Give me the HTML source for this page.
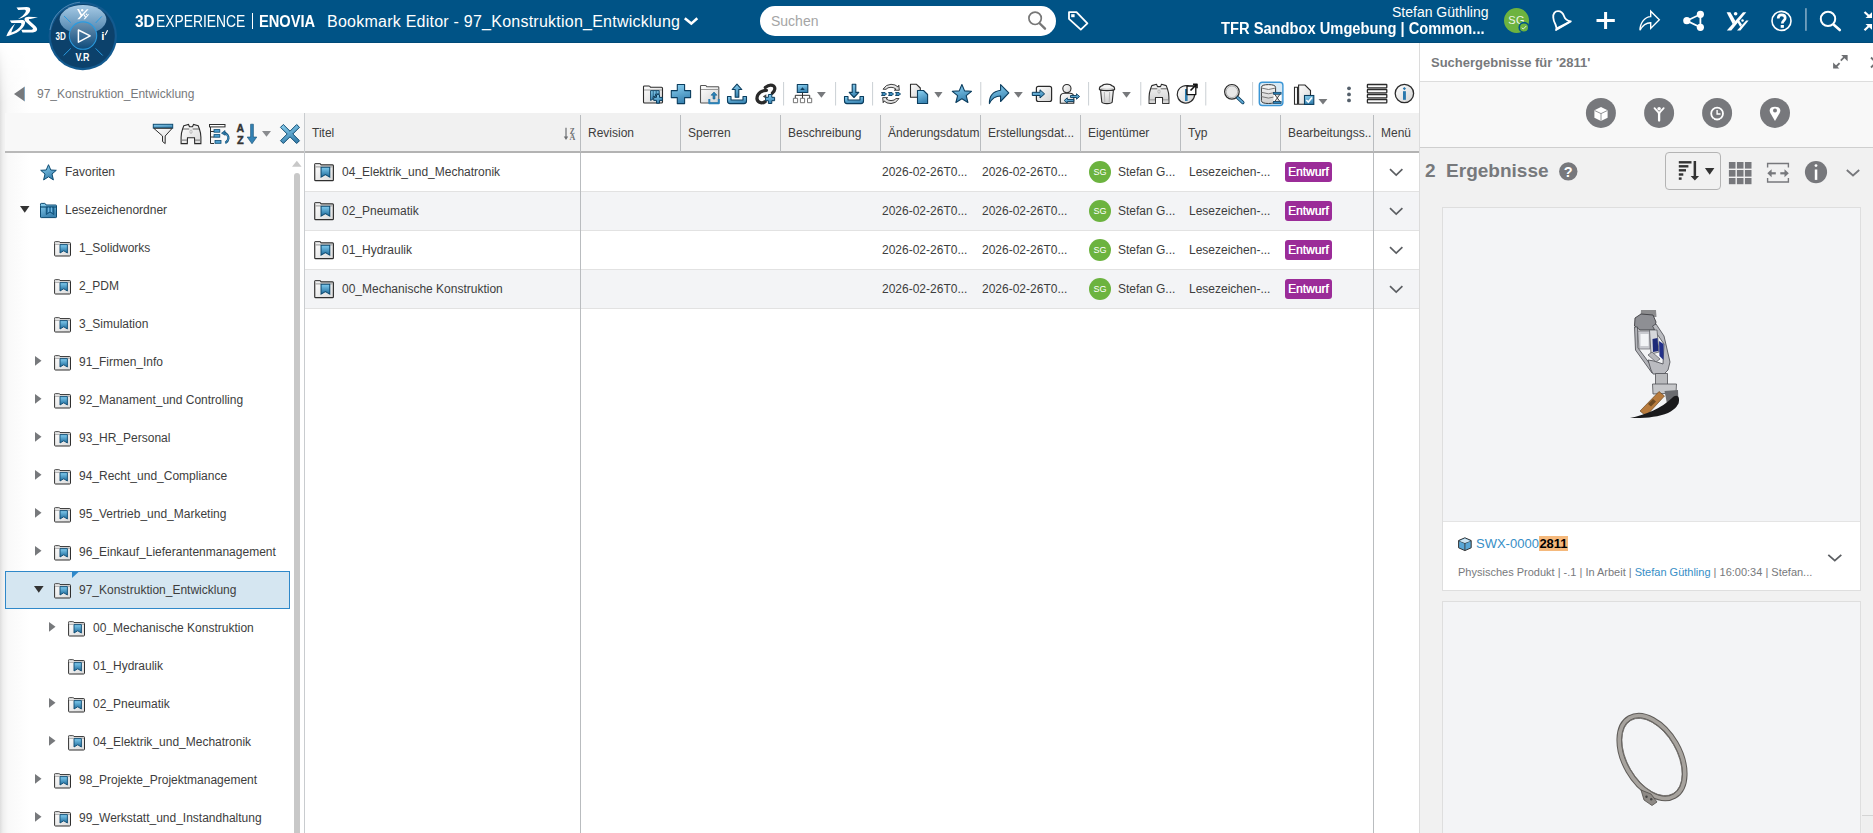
<!DOCTYPE html>
<html><head><meta charset="utf-8">
<style>
*{box-sizing:border-box;margin:0;padding:0}
html,body{width:1873px;height:833px;overflow:hidden;background:#fff;font-family:"Liberation Sans",sans-serif;color:#3d3d3d;font-size:12px}
.a{position:absolute}
svg{position:absolute;overflow:visible}
#hdr{left:0;top:0;width:1873px;height:43px;background:#005386;border-bottom:1px solid #004a78}
.ht{color:#fff;white-space:nowrap}
#lshadow{left:0;top:43px;width:30px;height:790px;background:linear-gradient(to right,#dedede 0,#efefef 3px,#f9f9f9 8px,#fff 30px);-webkit-mask-image:linear-gradient(to bottom,transparent 0,rgba(0,0,0,.5) 25px,#000 60px);mask-image:linear-gradient(to bottom,transparent 0,rgba(0,0,0,.5) 25px,#000 60px)}
.tr{position:absolute;height:38px;line-height:38px;white-space:nowrap;color:#3d3d3d;font-size:12px}
.th{position:absolute;top:114px;height:40px;line-height:39px;font-size:12px;color:#3d3d3d;white-space:nowrap}
.row{position:absolute;left:305px;width:1114px;height:39px;border-bottom:1px solid #e2e2e2}
.cell{position:absolute;top:0;line-height:38px;font-size:12px;color:#3d3d3d;white-space:nowrap}
.badge{position:absolute;background:#9b2c98;color:#fff;font-size:12px;height:19.5px;line-height:21px;border-radius:3px;padding:0 3px;width:47px;text-align:left;text-shadow:0.35px 0 0 #fff}
</style></head><body>

<div id="lshadow" class="a"></div>

<!-- HEADER -->
<div id="hdr" class="a">
  <div class="a ht" style="left:134.8px;top:13px;font-size:16px;font-weight:bold;transform:scaleX(0.96);transform-origin:0 0">3D</div>
  <div class="a ht" style="left:156.3px;top:13px;font-size:16px;transform:scaleX(0.866);transform-origin:0 0">EXPERIENCE</div>
  <div class="a" style="left:252px;top:13px;width:1.3px;height:16px;background:#fff"></div>
  <div class="a ht" style="left:259.3px;top:13px;font-size:16px;font-weight:bold;transform:scaleX(0.915);transform-origin:0 0">ENOVIA</div>
  <div class="a ht" style="left:327px;top:13px;font-size:16px;letter-spacing:0.24px">Bookmark Editor - 97_Konstruktion_Entwicklung</div>
  <div class="a" style="left:760px;top:6px;width:296px;height:30px;background:#fff;border-radius:15px"></div>
  <div class="a" style="left:771px;top:13px;font-size:14px;color:#a5a5a5">Suchen</div>
  <div class="a ht" style="left:1392px;top:4px;font-size:14px">Stefan Güthling</div>
  <div class="a ht" style="left:1221px;top:20px;font-size:16px;font-weight:bold;transform:scaleX(0.918);transform-origin:0 0">TFR Sandbox Umgebung | Common...</div>
  <div class="a" style="left:1504px;top:8px;width:25px;height:25px;border-radius:50%;background:#6db33f;color:#fff;font-size:11px;line-height:24px;text-align:center;letter-spacing:0.2px;color:#eef6e8">SG</div>
</div>
<svg width="1873" height="80" style="left:0;top:0" viewBox="0 0 1873 80">
  <!-- 3DS logo -->
  <g fill="#fff">
    <path d="M16.5,7.4 L26.8,7 C30.8,7 31,9.8 29.3,12.5 C27.3,15.6 23,18 17.8,19.3 C21.5,17 24.5,14.5 25.6,12 C26.3,10.4 25.6,9.8 23.8,9.8 L18.2,9.9 Z"/>
    <path d="M9.8,20.5 L21.8,20.1 C25.6,20.1 25.8,22.6 24.1,25.8 C20.8,31.5 13.5,35 6.3,36.3 C8,31.5 11,27 15.3,23.5 C13.3,27 11.8,30 11.4,32.6 C15.6,31 19.3,28.2 21,25.2 C21.9,23.5 21.4,22.9 19.8,22.9 L11.5,23 Z"/>
    <path d="M38,17.3 L28.8,16.7 C24,16.7 23.5,19.6 26,22 L31.8,27.2 C33.8,29 33.5,29.7 30.8,29.7 L21.3,29.8 L22.5,32.5 L30.5,32.6 C37.5,32.6 38.8,29.3 35.3,26 L29.8,21 C28.2,19.5 28.5,19.1 30.5,19.1 Z"/>
  </g>
  <!-- compass -->
  <defs>
    <linearGradient id="lens" x1="0" y1="0" x2="0" y2="1"><stop offset="0" stop-color="#a7cbe6"/><stop offset="1" stop-color="#4b80aa"/></linearGradient>
    <linearGradient id="ctr" x1="0" y1="0" x2="0" y2="1"><stop offset="0" stop-color="#6f93b0"/><stop offset="0.5" stop-color="#3d6f98"/><stop offset="1" stop-color="#0e4b7a"/></linearGradient>
  </defs>
  <circle cx="82.8" cy="36" r="34.2" fill="#135a8f"/>
  <path d="M50,30 A33,33 0 0 1 80,2.2" fill="none" stroke="#6d9cc4" stroke-width="0.7"/>
  <circle cx="82.8" cy="36" r="32" fill="#0c416b"/>
  <ellipse cx="83" cy="19.5" rx="23.4" ry="14.6" fill="url(#lens)"/>
  <circle cx="83" cy="35.6" r="13.7" fill="url(#ctr)" stroke="#2a9be0" stroke-width="1.1"/>
  <path d="M78.4,30 L78.4,42.2 L90.2,35.9 Z" fill="none" stroke="#fff" stroke-width="1.5" stroke-linejoin="round"/>
  <g stroke="#2a9be0" stroke-width="1"><line x1="64" y1="16" x2="70.8" y2="22.6"/><line x1="101.8" y1="16.4" x2="95.6" y2="23"/><line x1="63.6" y1="55.5" x2="70.8" y2="48.4"/><line x1="95.6" y1="48.4" x2="102.7" y2="55.5"/></g>
  <g fill="#fff" font-family="Liberation Sans" font-weight="bold">
    <text x="55.5" y="39.9" font-size="11.3" textLength="10.3" lengthAdjust="spacingAndGlyphs">3D</text>
    <text x="75.4" y="60.8" font-size="10.4" textLength="14" lengthAdjust="spacingAndGlyphs">V.R</text>
    <text x="101.3" y="40.4" font-size="11.5">i</text>
  </g>
  
  <g fill="#fff">
    <path d="M77.3,19.2 L79.4,19.2 L88.6,9.3 L86.8,9.3 Z"/>
    <path d="M77,9.1 L79,9.1 L82.5,15.5 L81.3,17 Z"/>
    <circle cx="82.2" cy="10.3" r="1.2"/>
    <path d="M83.5,19.2 L85,19.2 L89.2,14.2 L88,14.2 Z"/>
    <path d="M83.2,14.5 L84.6,14.5 L86,16.8 L85.2,17.7 Z"/>
    <circle cx="86.5" cy="14.2" r="0.8"/>
  </g>
  <path d="M105.2,35 L107.6,30.2" stroke="#fff" stroke-width="1.2"/>
  <!-- title chevron -->
  <path d="M684.8,18.3 L691.3,23.6 L697.3,18.3" fill="none" stroke="#fff" stroke-width="2.6"/>
  <!-- search icon -->
  <circle cx="1035.1" cy="18.3" r="6.2" fill="none" stroke="#777" stroke-width="1.7"/>
  <path d="M1039.8,23.5 L1045,28.7" stroke="#777" stroke-width="2.4" stroke-linecap="round"/>
  <!-- tag -->
  <path d="M1069,12.2 L1076.5,12.2 L1087.4,23.4 L1080.8,29.6 L1069,18.9 Z" fill="none" stroke="#fff" stroke-width="1.8" stroke-linejoin="round"/>
  <rect x="1071.2" y="14.2" width="3.4" height="3" fill="#fff"/>
  <!-- avatar badge -->
  <circle cx="1524" cy="27.4" r="4.8" fill="#6db33f" stroke="#005386" stroke-width="1.6"/>
  <path d="M1521.7,27.8 L1523.3,29 L1526.4,25.9" fill="none" stroke="#e9f3ff" stroke-width="0.9"/>
  <!-- bell -->
  <path d="M1553.3,17.8 C1552.8,13.5 1555,11.2 1558,11.2 C1561,11.2 1563,13 1564.2,16.5 C1565,19 1566.5,20.5 1570.8,21.4 L1556,30 C1556.8,28 1556.5,26.5 1555.5,24.5 C1554.3,22.5 1553.5,20.5 1553.3,17.8 Z" fill="none" stroke="#fff" stroke-width="1.8" stroke-linejoin="round"/>
  <path d="M1556,27.8 L1569.8,20.8 L1571.4,21.6 L1556,30.6 Z" fill="#fff"/>
  <!-- plus -->
  <path d="M1596.5,20.6 L1614.8,20.6 M1605.6,12 L1605.6,29" stroke="#fff" stroke-width="3"/>
  <!-- share arrow -->
  <path d="M1640,30.3 C1640,22.5 1645,16.8 1650.7,16.6 L1650.7,11.2 L1659.3,19.8 L1650.7,28.4 L1650.7,22.8 C1646,22.8 1642.5,25.5 1640,30.3 Z" fill="none" stroke="#fff" stroke-width="1.4" stroke-linejoin="miter"/>
  <!-- share nodes -->
  <g fill="#fff"><circle cx="1686.8" cy="20.7" r="3.6"/><circle cx="1700.4" cy="14.3" r="3.6"/><circle cx="1700.4" cy="27.3" r="3.6"/></g>
  <path d="M1686.8,20.7 L1700.4,14.3 L1700.4,27.3 Z" fill="none" stroke="#fff" stroke-width="1.8"/>
  <!-- Yy -->
  <g fill="#fff">
    <path d="M1726.8,30.5 L1731.3,30.5 L1746.3,12.2 L1743,12.2 Z"/>
    <path d="M1726.6,12.2 L1730.4,12.2 L1735.4,21 L1732.8,24.3 Z"/>
    <circle cx="1735.6" cy="13.8" r="1.8"/>
    <path d="M1737,30.5 L1740.4,30.5 L1748.6,20.6 L1746.2,20.6 Z"/>
    <path d="M1736.8,21 L1739.5,21 L1742,24.8 L1740.2,27 Z"/>
    <circle cx="1742.5" cy="20.6" r="1.25"/>
  </g>
  <!-- help -->
  <circle cx="1781.5" cy="20.9" r="9.5" fill="none" stroke="#fff" stroke-width="1.6"/>
  <path d="M1778.2,18.6 C1778.2,16.1 1779.6,14.9 1781.6,14.9 C1783.7,14.9 1785.2,16.1 1785.2,18 C1785.2,20.4 1782.3,20.8 1782.3,23.6" fill="none" stroke="#fff" stroke-width="2.7"/>
  <rect x="1780.7" y="25" width="3.2" height="2.8" fill="#fff"/>
  <!-- separator -->
  <rect x="1805.4" y="8.2" width="1.1" height="22.6" fill="#b9cfe0"/>
  <!-- search -->
  <circle cx="1828" cy="18.9" r="7.2" fill="none" stroke="#fff" stroke-width="2"/>
  <path d="M1833.8,24.8 L1839.8,30" stroke="#fff" stroke-width="2.6" stroke-linecap="round"/>
  <!-- compress -->
  <path d="M1864.5,12 L1870,17" stroke="#fff" stroke-width="2.2"/>
  <path d="M1872,12.2 L1872,18 L1865.5,18 Z" fill="#fff"/>
  <path d="M1864.5,30.2 L1870,25" stroke="#fff" stroke-width="2.2"/>
  <path d="M1872,29.8 L1872,24 L1865.5,24 Z" fill="#fff"/>
</svg>
<!-- TOOLBAR -->
<svg width="1873" height="833" style="left:0;top:0;pointer-events:none" viewBox="0 0 1873 833">
<defs>
  <linearGradient id="bg1" x1="0" y1="0" x2="0.3" y2="1"><stop offset="0" stop-color="#8ed3f3"/><stop offset="1" stop-color="#3a85b3"/></linearGradient>
  <linearGradient id="bg2" x1="0" y1="0" x2="0" y2="1"><stop offset="0" stop-color="#8fd0ef"/><stop offset="1" stop-color="#2f77a6"/></linearGradient>
  <linearGradient id="gg" x1="0" y1="0" x2="1" y2="1"><stop offset="0" stop-color="#ffffff"/><stop offset="1" stop-color="#d4d4d4"/></linearGradient>
  <linearGradient id="gg2" x1="0" y1="0" x2="0" y2="1"><stop offset="0" stop-color="#f6f6f6"/><stop offset="1" stop-color="#cfcfcf"/></linearGradient>
</defs>
<!-- breadcrumb back triangle -->
<path d="M14,94 L24.8,86.5 L24.8,101.5 Z" fill="#77797c"/>
<path d="M24.5,87 L24.5,101" stroke="#7db8e0" stroke-width="0.6"/>

<g stroke="#0b3d5e" stroke-linejoin="round">
  <!-- 1 folder with bookmark plus -->
  <path d="M643.5,88 L643.5,86.8 Q643.5,86 644.5,86 L649,86 Q650,86 650.5,87.2 L661.5,87.2 Q662.5,87.2 662.5,88.2 L662.5,102 Q662.5,103 661.5,103 L644.5,103 Q643.5,103 643.5,102 Z" fill="url(#gg)" stroke="#2b2b2b" stroke-width="1.1"/>
  <path d="M644,90 L662,90" stroke="#aaa" stroke-width="1.2"/>
  <path d="M650.6,90.6 L659.2,90.6 L659.2,94 L655.5,94 L655.5,96.5 L653,96.5 L653,99 L650.6,100.5 Z" fill="url(#bg1)" stroke-width="0.9"/>
  <path d="M653.2,91 L653.2,96 M656.2,91 L656.2,93.5" stroke="#0b3d5e" stroke-width="0.7"/>
  <path d="M656.5,94.6 L659.5,94.6 L659.5,97.4 L662.3,97.4 L662.3,100.4 L659.5,100.4 L659.5,103.2 L656.5,103.2 L656.5,100.4 L653.7,100.4 L653.7,97.4 L656.5,97.4 Z" fill="url(#bg1)" stroke-width="1"/>
  <!-- 2 big plus -->
  <path d="M677.3,84.5 L684.6,84.5 L684.6,90.6 L690.6,90.6 L690.6,97.6 L684.6,97.6 L684.6,103.6 L677.3,103.6 L677.3,97.6 L671.3,97.6 L671.3,90.6 L677.3,90.6 Z" fill="url(#bg1)" stroke-width="1.1"/>
  <!-- 3 folder upload -->
  <path d="M700.5,87 L700.5,86.2 Q700.5,85.5 701.3,85.5 L705.5,85.5 Q706.3,85.5 706.8,86.8 L718,86.8 Q718.8,86.8 718.8,87.6 L718.8,102.3 Q718.8,103 718,103 L701.3,103 Q700.5,103 700.5,102.3 Z" fill="url(#gg)" stroke="#555" stroke-width="1.1"/>
  <path d="M701,89.5 L718.4,89.5" stroke="#999" stroke-width="1"/>
  <path d="M709.3,99 L709.3,103.2 L718.8,103.2 L718.8,99" fill="none" stroke="#2b82b8" stroke-width="2"/>
  <path d="M714,92 L717,95.2 L715,95.2 L715,99 L713,99 L713,95.2 L711,95.2 Z" fill="#2b82b8" stroke="#1a5f8c" stroke-width="0.6"/>
  <!-- 4 upload -->
  <path d="M727.5,96.5 L731,96.5 L731,100 L743,100 L743,96.5 L746.5,96.5 L746.5,101 Q746.5,103.6 744,103.6 L730,103.6 Q727.5,103.6 727.5,101 Z" fill="url(#bg1)" stroke-width="1.1"/>
  <path d="M737,84.2 L741.8,89.5 L738.8,89.5 L738.8,97.2 L735.2,97.2 L735.2,89.5 L732.2,89.5 Z" fill="url(#bg1)" stroke-width="1.1"/>
  <!-- 5 link plus -->
  <path d="M765.2,87.5 Q770,83.6 773.8,86 Q776.6,89 772.3,93.2" fill="none" stroke="#2a2a2a" stroke-width="3.2" stroke-linecap="round"/>
  <path d="M766.5,90.3 Q760.5,90.3 757.8,95 Q755.5,100 759.5,102.3 Q762.5,103.6 765.2,101.6" fill="none" stroke="#2a2a2a" stroke-width="3.2" stroke-linecap="round"/>
  <path d="M762.8,96.5 L766.3,94.3 L766.3,98.7 Z" fill="#444" stroke="none"/>
  <path d="M768.4,94.5 L771.8,94.5 L771.8,97.3 L774.6,97.3 L774.6,100.7 L771.8,100.7 L771.8,103.5 L768.4,103.5 L768.4,100.7 L765.6,100.7 L765.6,97.3 L768.4,97.3 Z" fill="url(#bg1)" stroke-width="1"/>
  <!-- 6 hierarchy -->
  <rect x="797.3" y="84.5" width="10.5" height="8" fill="url(#bg1)" stroke-width="1.1"/>
  <path d="M800.2,90 L802.5,87.2 L804.8,90 Z" fill="#0b3d5e" stroke="none"/>
  <path d="M802.5,92.5 L802.5,98 M795.3,98 L795.3,95.3 L809.7,95.3 L809.7,98" fill="none" stroke="#333" stroke-width="1"/>
  <rect x="793.4" y="98.3" width="4.2" height="4.4" fill="#fff" stroke="#666" stroke-width="0.9"/>
  <rect x="800.4" y="98.3" width="4.2" height="4.4" fill="#fff" stroke="#666" stroke-width="0.9"/>
  <rect x="807.5" y="98.3" width="4.2" height="4.4" fill="#fff" stroke="#666" stroke-width="0.9"/>
  <!-- 7 download -->
  <path d="M844.5,96.5 L848,96.5 L848,100 L860,100 L860,96.5 L863.5,96.5 L863.5,101 Q863.5,103.6 861,103.6 L847,103.6 Q844.5,103.6 844.5,101 Z" fill="url(#bg1)" stroke-width="1.1"/>
  <path d="M854,97.5 L858.8,92.4 L855.8,92.4 L855.8,84.3 L852.2,84.3 L852.2,92.4 L849.2,92.4 Z" fill="url(#bg1)" stroke-width="1.1"/>
  <!-- 8 sync -->
  <path d="M883,89.2 Q886,84.3 891,84.3 Q895.5,84.3 898,87 L898.8,85.2 L899.3,90.3 L894.3,90.2 L896,89.2 Q894,87.3 891,87.3 Q887.5,87.3 886,89.3 Z" fill="url(#gg2)" stroke="#2b2b2b" stroke-width="0.9"/>
  <path d="M899,98.5 Q896,103.6 891,103.6 Q886.5,103.6 884,100.9 L883.2,102.7 L882.7,97.6 L887.7,97.7 L886,98.7 Q888,100.6 891,100.6 Q894.5,100.6 896,98.6 Z" fill="url(#gg2)" stroke="#2b2b2b" stroke-width="0.9"/>
  <path d="M881.5,92.5 L885,92.5 L886.5,94 L885,95.5 L881.5,95.5 L882.5,94 Z M888.5,92.5 L892,92.5 L893.5,94 L892,95.5 L888.5,95.5 L889.5,94 Z M895.5,92.5 L899,92.5 L900.5,94 L899,95.5 L895.5,95.5 L896.5,94 Z" fill="#3b8bbd" stroke="#0b3d5e" stroke-width="0.9"/>
  <!-- 9 copy -->
  <path d="M910.5,84.3 L916.5,84.3 L920.3,88 L920.3,97.3 L910.5,97.3 Z" fill="url(#gg)" stroke="#2b2b2b" stroke-width="1.1"/>
  <path d="M917.5,90.5 L923.5,90.5 L927.6,94.5 L927.6,103.5 L917.5,103.5 Z" fill="url(#bg1)" stroke-width="1.1"/>
  <!-- 10 star -->
  <path d="M961.9,84.5 L964.6,90.9 L971.5,91.3 L966.2,95.7 L967.9,102.5 L961.9,98.8 L955.9,102.5 L957.6,95.7 L952.3,91.3 L959.2,90.9 Z" fill="url(#bg1)" stroke-width="1.1"/>
  <!-- 11 forward arrow -->
  <path d="M989.4,103.6 Q989,92 1000.6,90.2 L1000.6,84.6 L1008.8,92.9 L1000.6,101.5 L1000.6,96 Q993,96 989.4,103.6 Z" fill="url(#bg1)" stroke-width="1.1"/>
  <!-- 12 login -->
  <rect x="1036.4" y="86.3" width="15.2" height="15.2" rx="2" fill="url(#gg)" stroke="#2b2b2b" stroke-width="1.2"/>
  <path d="M1032.3,92.3 L1040,92.3 L1040,89.8 L1044.6,93.9 L1040,98 L1040,95.5 L1032.3,95.5 Z" fill="url(#bg1)" stroke-width="1"/>
  <!-- 13 user swap -->
  <circle cx="1066.9" cy="88.6" r="4.1" fill="url(#gg)" stroke="#2b2b2b" stroke-width="1.1"/>
  <path d="M1060.3,103.3 L1060.3,97.5 Q1060.3,93.5 1064,93.3 L1070,93.3 Q1073.5,93.5 1073.8,96.5 L1073.8,103.3 Z" fill="url(#gg)" stroke="#2b2b2b" stroke-width="1.1"/>
  <path d="M1070.5,95.5 L1076.5,95.5 L1076.5,93.8 L1079.6,96.5 L1076.5,99.2 L1076.5,97.5 L1070.5,97.5 Z" fill="url(#bg1)" stroke-width="0.9"/>
  <path d="M1073.8,99.5 L1067.3,99.5 L1067.3,97.8 L1064.2,100.5 L1067.3,103.2 L1067.3,101.5 L1073.8,101.5 Z" fill="url(#bg1)" stroke-width="0.9"/>
  <!-- 14 trash -->
  <path d="M1100.6,90.3 L1113.4,90.3 L1112.2,102.2 Q1111.8,103.6 1107,103.6 Q1102.2,103.6 1101.8,102.2 Z" fill="url(#gg2)" stroke="#2b2b2b" stroke-width="1.1"/>
  <path d="M1104.3,92 L1104.8,102 M1109.7,92 L1109.2,102" stroke="#b5b5b5" stroke-width="1"/>
  <path d="M1099.4,89.6 Q1099,86.4 1102.3,85.6 Q1103.2,84.1 1107,84.1 Q1110.8,84.1 1111.7,85.6 Q1115,86.4 1114.6,89.6 Q1107,91.6 1099.4,89.6 Z" fill="#f4f4f4" stroke="#2b2b2b" stroke-width="1.1"/>
  <path d="M1100.5,88.5 Q1107,90 1113.5,88.5" fill="none" stroke="#c8c8c8" stroke-width="1"/>
  <!-- 15 binoculars -->
  <path d="M1151.8,85.6 L1156.5,84.3 L1157.5,86.6 L1160.5,86.6 L1161.5,84.3 L1166.2,85.6 L1167.4,88.8 Q1168.9,93 1168.9,97 L1168.9,103.4 L1162.7,103.4 L1162.5,97.5 L1155.5,97.5 L1155.3,103.4 L1149.1,103.4 L1149.1,97 Q1149.1,93 1150.6,88.8 Z" fill="url(#gg2)" stroke="#2b2b2b" stroke-width="1.1"/>
  <path d="M1150.8,88.8 L1157.3,88.8 M1160.7,88.8 L1167.2,88.8" stroke="#555" stroke-width="0.9"/>
  <path d="M1149.6,100 L1155,100 M1163,100 L1168.4,100" stroke="#888" stroke-width="1.2"/>
  <rect x="1149.6" y="100.5" width="5.4" height="2.6" fill="#d5d5d5" stroke="none"/>
  <rect x="1163" y="100.5" width="5.4" height="2.6" fill="#d5d5d5" stroke="none"/>
  <ellipse cx="1159" cy="91.5" rx="1.1" ry="1.8" fill="none" stroke="#999" stroke-width="0.6"/>
  <!-- 16 pie export -->
  <path d="M1190,86.7 A8.7,8.7 0 1 0 1194.6,95" fill="url(#gg)" stroke="#2b2b2b" stroke-width="1.2"/>
  <rect x="1185" y="89" width="2.6" height="12" fill="#2e7eb0" stroke="none"/>
  <rect x="1187" y="86" width="8.8" height="8.6" fill="#fff" stroke="#111" stroke-width="1.3"/>
  <path d="M1190.5,90.5 L1196,85 M1193,84.3 L1197,84.3 L1197,88.3" fill="none" stroke="#111" stroke-width="1.6"/>
  <!-- 17 magnifier -->
  <circle cx="1231.9" cy="91.8" r="7.3" fill="#e8e8e8" stroke="#2b2b2b" stroke-width="1.2"/>
  <circle cx="1231.9" cy="91.8" r="5.8" fill="none" stroke="#999" stroke-width="0.7"/>
  <path d="M1237.8,97.8 L1242.8,102.5" stroke="#0b3d5e" stroke-width="3.4" stroke-linecap="round"/>
  <path d="M1237.8,97.8 L1242.8,102.5" stroke="#5fa8d3" stroke-width="1.8" stroke-linecap="round"/>
</g>
<!-- 18 selected db -->
<rect x="1259.3" y="82.3" width="23.6" height="23.2" rx="3" fill="#d9e9f4" stroke="#3a96d6" stroke-width="1.4"/>
<g stroke="#3a3a3a" stroke-width="1">
  <path d="M1261.4,87.5 Q1261.4,84.6 1268.5,84.6 Q1275.6,84.6 1275.6,87.5 L1275.6,100.6 Q1275.6,103.5 1268.5,103.5 Q1261.4,103.5 1261.4,100.6 Z" fill="url(#gg2)"/>
  <path d="M1261.4,88 Q1268.5,91 1275.6,88 M1261.4,92.3 Q1268.5,95.3 1275.6,92.3 M1261.4,96.6 Q1268.5,99.6 1275.6,96.6" fill="none" stroke="#777"/>
</g>
<rect x="1273.5" y="92.5" width="7.5" height="10.8" fill="#fff" stroke="none"/>
<path d="M1274.3,93.8 L1280.3,93.8 L1277.3,98 Z M1274.3,102 L1280.3,102 L1277.3,98 Z" fill="#e0e0e0" stroke="#333" stroke-width="0.9"/>
<rect x="1273.5" y="92.3" width="7.6" height="1.9" fill="#2e86be" stroke="#0b3d5e" stroke-width="0.7"/>
<rect x="1273.5" y="101.6" width="7.6" height="1.9" fill="#2e86be" stroke="#0b3d5e" stroke-width="0.7"/>
<!-- 19 paste check -->
<g stroke="#2b2b2b" stroke-width="1.1">
  <path d="M1294.5,87.3 L1297.5,87.3 L1297.5,104.2 L1294.5,104.2 Z" fill="#fff"/>
  <path d="M1298.6,85 L1305,85 L1310.5,90.5 L1310.5,104.2 L1298.6,104.2 Z" fill="url(#gg)"/>
</g>
<rect x="1304.5" y="95.5" width="9.3" height="8.9" fill="url(#bg1)" stroke="#0b3d5e" stroke-width="1.1"/>
<path d="M1306.3,100 L1308.3,102 L1312,97.5" fill="none" stroke="#fff" stroke-width="1.6"/>
<!-- dropdown triangles -->
<g fill="#77797c">
  <path d="M817,92 L825.8,92 L821.4,97.8 Z"/>
  <path d="M934.3,92 L942.5,92 L938.4,97.8 Z"/>
  <path d="M1014,92 L1022.8,92 L1018.4,97.8 Z"/>
  <path d="M1122.2,92 L1130.8,92 L1126.5,97.8 Z"/>
  <path d="M1318.5,99 L1327.4,99 L1323,104.5 Z"/>
</g>
<!-- separators -->
<g fill="#cfd4d8">
  <rect x="783" y="82" width="1.1" height="23.5"/>
  <rect x="835" y="82" width="1.1" height="23.5"/>
  <rect x="872" y="82" width="1.1" height="23.5"/>
  <rect x="980.2" y="82" width="1.1" height="23.5"/>
  <rect x="1088" y="82" width="1.1" height="23.5"/>
  <rect x="1140.2" y="82" width="1.1" height="23.5"/>
  <rect x="1205.2" y="82" width="1.1" height="23.5"/>
  <rect x="1252" y="82" width="1.1" height="23.5"/>
</g>
<!-- dots -->
<g fill="#55606b"><circle cx="1349" cy="88.3" r="1.9"/><circle cx="1349" cy="94.4" r="1.9"/><circle cx="1349" cy="100.4" r="1.9"/></g>
<!-- list -->
<g fill="#fbfbfb" stroke="#2b2b2b" stroke-width="1.3">
  <rect x="1367.4" y="84.5" width="19.4" height="3.4" rx="0.6"/>
  <rect x="1367.4" y="89.5" width="19.4" height="3.4" rx="0.6"/>
  <rect x="1367.4" y="94.5" width="19.4" height="3.4" rx="0.6"/>
  <rect x="1367.4" y="99.5" width="19.4" height="3.4" rx="0.6"/>
</g>
<!-- info -->
<circle cx="1404.4" cy="93.5" r="9.2" fill="url(#gg)" stroke="#2b2b2b" stroke-width="1.3"/>
<rect x="1403" y="91.2" width="2.9" height="8.6" fill="#2a78ad"/>
<path d="M1404.4,87 L1406,88.6 L1404.4,90.2 L1402.8,88.6 Z" fill="#2a78ad"/>
</svg>
<!-- breadcrumb -->
<div class="a" style="left:37px;top:87px;font-size:12px;color:#77797c">97_Konstruktion_Entwicklung</div>
<!-- TREE PANEL -->
<svg width="0" height="0" style="left:0;top:0">
<defs>
  <linearGradient id="fbg" x1="0" y1="0" x2="0" y2="1"><stop offset="0" stop-color="#82cdf0"/><stop offset="1" stop-color="#1d6a9a"/></linearGradient>
  <linearGradient id="fbody" x1="0" y1="0" x2="1" y2="1"><stop offset="0" stop-color="#ffffff"/><stop offset="1" stop-color="#dadada"/></linearGradient>
  <linearGradient id="bfold" x1="0" y1="0" x2="0.4" y2="1"><stop offset="0" stop-color="#8fd3f2"/><stop offset="1" stop-color="#3b83b0"/></linearGradient>
</defs>
</svg>
<div class="a" style="left:5px;top:113px;width:299px;height:40px;background:#f8f8f8;border-bottom:2px solid #b9b9b9"></div>
<div class="a" style="left:304px;top:113px;width:1px;height:720px;background:#c9cccf"></div>
<!-- selected row -->
<div class="a" style="left:5px;top:571px;width:285px;height:38px;background:#d5e6f1;border:1px solid #2f88c9"></div>
<svg width="8" height="8" style="left:71px;top:571px"><path d="M1,1 L7.5,1 L1,7 Z" fill="#2f88c9"/></svg>
<!-- scrollbar -->
<svg width="12" height="8" style="left:291px;top:160px"><path d="M1,6.8 L5.8,0.7 L10.6,6.8 Z" fill="#c8c8c8"/></svg>
<div class="a" style="left:294px;top:173px;width:6px;height:660px;background:#c8c8c8;border-radius:3px 3px 0 0"></div>
<div class="tr" style="left:65px;top:153px">Favoriten</div>
<svg width="17" height="17" style="left:40px;top:164px"><path d="M8.5,0.7 L10.8,6 L16.3,6.3 L12,10 L13.4,15.9 L8.5,12.8 L3.6,15.9 L5,10 L0.7,6.3 L6.2,6 Z" fill="url(#bfold)" stroke="#0d4b72" stroke-width="1"/></svg>
<div class="tr" style="left:65px;top:191px">Lesezeichenordner</div>
<svg width="17" height="15" style="left:40px;top:203px"><path d="M0.5,2.5 L0.5,1.1 Q0.5,0.4 1.2,0.4 L4.8,0.4 Q5.5,0.4 6,2 L15.8,2 Q16.5,2 16.5,2.8 L16.5,14 Q16.5,14.6 15.8,14.6 L1.2,14.6 Q0.5,14.6 0.5,14 Z" fill="url(#bfold)" stroke="#0d4b72" stroke-width="1"/>
    <path d="M0.8,4 L16.2,4" stroke="#0d4b72" stroke-width="1.2"/>
    <path d="M6.3,4.2 L13.8,4.2 L13.8,11.5 L10,9 L6.3,11.5 Z" fill="#2f7cad" stroke="#0d4b72" stroke-width="0.9"/>
    <path d="M8.6,4.5 L8.6,9 M11.5,4.5 L11.5,9" stroke="#7fc0e3" stroke-width="0.9"/></svg>
<svg width="12" height="9" style="left:19.8px;top:205.8px"><path d="M0,0 L9.5,0 L4.75,6.7 Z" fill="#333"/></svg>
<div class="tr" style="left:79px;top:229px">1_Solidworks</div>
<svg width="17" height="15.5" style="left:54.2px;top:240.7px"><path d="M0.6,2.5 L0.6,1.3 Q0.6,0.5 1.4,0.5 L4.8,0.5 Q5.6,0.5 6,1.6 L15.8,1.6 Q16.5,1.6 16.5,2.4 L16.5,14.2 Q16.5,15 15.7,15 L1.4,15 Q0.6,15 0.6,14.2 Z" fill="url(#fbody)" stroke="#2f2f2f" stroke-width="1"/>
    <path d="M1.1,3.3 L16,3.3" stroke="#a9a9a9" stroke-width="1.1"/>
    <path d="M1.1,1.3 L5,1.3" stroke="#d0d0d0" stroke-width="1.2"/>
    <path d="M6,3.6 L13.4,3.6 L13.4,12 L9.7,9.8 L6,12 Z" fill="url(#fbg)" stroke="#0d4b72" stroke-width="0.9"/></svg>
<div class="tr" style="left:79px;top:267px">2_PDM</div>
<svg width="17" height="15.5" style="left:54.2px;top:278.7px"><path d="M0.6,2.5 L0.6,1.3 Q0.6,0.5 1.4,0.5 L4.8,0.5 Q5.6,0.5 6,1.6 L15.8,1.6 Q16.5,1.6 16.5,2.4 L16.5,14.2 Q16.5,15 15.7,15 L1.4,15 Q0.6,15 0.6,14.2 Z" fill="url(#fbody)" stroke="#2f2f2f" stroke-width="1"/>
    <path d="M1.1,3.3 L16,3.3" stroke="#a9a9a9" stroke-width="1.1"/>
    <path d="M1.1,1.3 L5,1.3" stroke="#d0d0d0" stroke-width="1.2"/>
    <path d="M6,3.6 L13.4,3.6 L13.4,12 L9.7,9.8 L6,12 Z" fill="url(#fbg)" stroke="#0d4b72" stroke-width="0.9"/></svg>
<div class="tr" style="left:79px;top:305px">3_Simulation</div>
<svg width="17" height="15.5" style="left:54.2px;top:316.7px"><path d="M0.6,2.5 L0.6,1.3 Q0.6,0.5 1.4,0.5 L4.8,0.5 Q5.6,0.5 6,1.6 L15.8,1.6 Q16.5,1.6 16.5,2.4 L16.5,14.2 Q16.5,15 15.7,15 L1.4,15 Q0.6,15 0.6,14.2 Z" fill="url(#fbody)" stroke="#2f2f2f" stroke-width="1"/>
    <path d="M1.1,3.3 L16,3.3" stroke="#a9a9a9" stroke-width="1.1"/>
    <path d="M1.1,1.3 L5,1.3" stroke="#d0d0d0" stroke-width="1.2"/>
    <path d="M6,3.6 L13.4,3.6 L13.4,12 L9.7,9.8 L6,12 Z" fill="url(#fbg)" stroke="#0d4b72" stroke-width="0.9"/></svg>
<div class="tr" style="left:79px;top:343px">91_Firmen_Info</div>
<svg width="17" height="15.5" style="left:54.2px;top:354.7px"><path d="M0.6,2.5 L0.6,1.3 Q0.6,0.5 1.4,0.5 L4.8,0.5 Q5.6,0.5 6,1.6 L15.8,1.6 Q16.5,1.6 16.5,2.4 L16.5,14.2 Q16.5,15 15.7,15 L1.4,15 Q0.6,15 0.6,14.2 Z" fill="url(#fbody)" stroke="#2f2f2f" stroke-width="1"/>
    <path d="M1.1,3.3 L16,3.3" stroke="#a9a9a9" stroke-width="1.1"/>
    <path d="M1.1,1.3 L5,1.3" stroke="#d0d0d0" stroke-width="1.2"/>
    <path d="M6,3.6 L13.4,3.6 L13.4,12 L9.7,9.8 L6,12 Z" fill="url(#fbg)" stroke="#0d4b72" stroke-width="0.9"/></svg>
<svg width="9" height="12" style="left:34.9px;top:356.1px"><path d="M0,0 L6.5,4.85 L0,9.7 Z" fill="#77797c"/></svg>
<div class="tr" style="left:79px;top:381px">92_Manament_und Controlling</div>
<svg width="17" height="15.5" style="left:54.2px;top:392.7px"><path d="M0.6,2.5 L0.6,1.3 Q0.6,0.5 1.4,0.5 L4.8,0.5 Q5.6,0.5 6,1.6 L15.8,1.6 Q16.5,1.6 16.5,2.4 L16.5,14.2 Q16.5,15 15.7,15 L1.4,15 Q0.6,15 0.6,14.2 Z" fill="url(#fbody)" stroke="#2f2f2f" stroke-width="1"/>
    <path d="M1.1,3.3 L16,3.3" stroke="#a9a9a9" stroke-width="1.1"/>
    <path d="M1.1,1.3 L5,1.3" stroke="#d0d0d0" stroke-width="1.2"/>
    <path d="M6,3.6 L13.4,3.6 L13.4,12 L9.7,9.8 L6,12 Z" fill="url(#fbg)" stroke="#0d4b72" stroke-width="0.9"/></svg>
<svg width="9" height="12" style="left:34.9px;top:394.1px"><path d="M0,0 L6.5,4.85 L0,9.7 Z" fill="#77797c"/></svg>
<div class="tr" style="left:79px;top:419px">93_HR_Personal</div>
<svg width="17" height="15.5" style="left:54.2px;top:430.7px"><path d="M0.6,2.5 L0.6,1.3 Q0.6,0.5 1.4,0.5 L4.8,0.5 Q5.6,0.5 6,1.6 L15.8,1.6 Q16.5,1.6 16.5,2.4 L16.5,14.2 Q16.5,15 15.7,15 L1.4,15 Q0.6,15 0.6,14.2 Z" fill="url(#fbody)" stroke="#2f2f2f" stroke-width="1"/>
    <path d="M1.1,3.3 L16,3.3" stroke="#a9a9a9" stroke-width="1.1"/>
    <path d="M1.1,1.3 L5,1.3" stroke="#d0d0d0" stroke-width="1.2"/>
    <path d="M6,3.6 L13.4,3.6 L13.4,12 L9.7,9.8 L6,12 Z" fill="url(#fbg)" stroke="#0d4b72" stroke-width="0.9"/></svg>
<svg width="9" height="12" style="left:34.9px;top:432.1px"><path d="M0,0 L6.5,4.85 L0,9.7 Z" fill="#77797c"/></svg>
<div class="tr" style="left:79px;top:457px">94_Recht_und_Compliance</div>
<svg width="17" height="15.5" style="left:54.2px;top:468.7px"><path d="M0.6,2.5 L0.6,1.3 Q0.6,0.5 1.4,0.5 L4.8,0.5 Q5.6,0.5 6,1.6 L15.8,1.6 Q16.5,1.6 16.5,2.4 L16.5,14.2 Q16.5,15 15.7,15 L1.4,15 Q0.6,15 0.6,14.2 Z" fill="url(#fbody)" stroke="#2f2f2f" stroke-width="1"/>
    <path d="M1.1,3.3 L16,3.3" stroke="#a9a9a9" stroke-width="1.1"/>
    <path d="M1.1,1.3 L5,1.3" stroke="#d0d0d0" stroke-width="1.2"/>
    <path d="M6,3.6 L13.4,3.6 L13.4,12 L9.7,9.8 L6,12 Z" fill="url(#fbg)" stroke="#0d4b72" stroke-width="0.9"/></svg>
<svg width="9" height="12" style="left:34.9px;top:470.1px"><path d="M0,0 L6.5,4.85 L0,9.7 Z" fill="#77797c"/></svg>
<div class="tr" style="left:79px;top:495px">95_Vertrieb_und_Marketing</div>
<svg width="17" height="15.5" style="left:54.2px;top:506.7px"><path d="M0.6,2.5 L0.6,1.3 Q0.6,0.5 1.4,0.5 L4.8,0.5 Q5.6,0.5 6,1.6 L15.8,1.6 Q16.5,1.6 16.5,2.4 L16.5,14.2 Q16.5,15 15.7,15 L1.4,15 Q0.6,15 0.6,14.2 Z" fill="url(#fbody)" stroke="#2f2f2f" stroke-width="1"/>
    <path d="M1.1,3.3 L16,3.3" stroke="#a9a9a9" stroke-width="1.1"/>
    <path d="M1.1,1.3 L5,1.3" stroke="#d0d0d0" stroke-width="1.2"/>
    <path d="M6,3.6 L13.4,3.6 L13.4,12 L9.7,9.8 L6,12 Z" fill="url(#fbg)" stroke="#0d4b72" stroke-width="0.9"/></svg>
<svg width="9" height="12" style="left:34.9px;top:508.1px"><path d="M0,0 L6.5,4.85 L0,9.7 Z" fill="#77797c"/></svg>
<div class="tr" style="left:79px;top:533px">96_Einkauf_Lieferantenmanagement</div>
<svg width="17" height="15.5" style="left:54.2px;top:544.7px"><path d="M0.6,2.5 L0.6,1.3 Q0.6,0.5 1.4,0.5 L4.8,0.5 Q5.6,0.5 6,1.6 L15.8,1.6 Q16.5,1.6 16.5,2.4 L16.5,14.2 Q16.5,15 15.7,15 L1.4,15 Q0.6,15 0.6,14.2 Z" fill="url(#fbody)" stroke="#2f2f2f" stroke-width="1"/>
    <path d="M1.1,3.3 L16,3.3" stroke="#a9a9a9" stroke-width="1.1"/>
    <path d="M1.1,1.3 L5,1.3" stroke="#d0d0d0" stroke-width="1.2"/>
    <path d="M6,3.6 L13.4,3.6 L13.4,12 L9.7,9.8 L6,12 Z" fill="url(#fbg)" stroke="#0d4b72" stroke-width="0.9"/></svg>
<svg width="9" height="12" style="left:34.9px;top:546.1px"><path d="M0,0 L6.5,4.85 L0,9.7 Z" fill="#77797c"/></svg>
<div class="tr" style="left:79px;top:571px">97_Konstruktion_Entwicklung</div>
<svg width="17" height="15.5" style="left:54.2px;top:582.7px"><path d="M0.6,2.5 L0.6,1.3 Q0.6,0.5 1.4,0.5 L4.8,0.5 Q5.6,0.5 6,1.6 L15.8,1.6 Q16.5,1.6 16.5,2.4 L16.5,14.2 Q16.5,15 15.7,15 L1.4,15 Q0.6,15 0.6,14.2 Z" fill="url(#fbody)" stroke="#2f2f2f" stroke-width="1"/>
    <path d="M1.1,3.3 L16,3.3" stroke="#a9a9a9" stroke-width="1.1"/>
    <path d="M1.1,1.3 L5,1.3" stroke="#d0d0d0" stroke-width="1.2"/>
    <path d="M6,3.6 L13.4,3.6 L13.4,12 L9.7,9.8 L6,12 Z" fill="url(#fbg)" stroke="#0d4b72" stroke-width="0.9"/></svg>
<svg width="12" height="9" style="left:33.6px;top:585.8px"><path d="M0,0 L9.6,0 L4.8,6.7 Z" fill="#333"/></svg>
<div class="tr" style="left:93px;top:609px">00_Mechanische Konstruktion</div>
<svg width="17" height="15.5" style="left:68.2px;top:620.7px"><path d="M0.6,2.5 L0.6,1.3 Q0.6,0.5 1.4,0.5 L4.8,0.5 Q5.6,0.5 6,1.6 L15.8,1.6 Q16.5,1.6 16.5,2.4 L16.5,14.2 Q16.5,15 15.7,15 L1.4,15 Q0.6,15 0.6,14.2 Z" fill="url(#fbody)" stroke="#2f2f2f" stroke-width="1"/>
    <path d="M1.1,3.3 L16,3.3" stroke="#a9a9a9" stroke-width="1.1"/>
    <path d="M1.1,1.3 L5,1.3" stroke="#d0d0d0" stroke-width="1.2"/>
    <path d="M6,3.6 L13.4,3.6 L13.4,12 L9.7,9.8 L6,12 Z" fill="url(#fbg)" stroke="#0d4b72" stroke-width="0.9"/></svg>
<svg width="9" height="12" style="left:48.9px;top:622.1px"><path d="M0,0 L6.5,4.85 L0,9.7 Z" fill="#77797c"/></svg>
<div class="tr" style="left:93px;top:647px">01_Hydraulik</div>
<svg width="17" height="15.5" style="left:68.2px;top:658.7px"><path d="M0.6,2.5 L0.6,1.3 Q0.6,0.5 1.4,0.5 L4.8,0.5 Q5.6,0.5 6,1.6 L15.8,1.6 Q16.5,1.6 16.5,2.4 L16.5,14.2 Q16.5,15 15.7,15 L1.4,15 Q0.6,15 0.6,14.2 Z" fill="url(#fbody)" stroke="#2f2f2f" stroke-width="1"/>
    <path d="M1.1,3.3 L16,3.3" stroke="#a9a9a9" stroke-width="1.1"/>
    <path d="M1.1,1.3 L5,1.3" stroke="#d0d0d0" stroke-width="1.2"/>
    <path d="M6,3.6 L13.4,3.6 L13.4,12 L9.7,9.8 L6,12 Z" fill="url(#fbg)" stroke="#0d4b72" stroke-width="0.9"/></svg>
<div class="tr" style="left:93px;top:685px">02_Pneumatik</div>
<svg width="17" height="15.5" style="left:68.2px;top:696.7px"><path d="M0.6,2.5 L0.6,1.3 Q0.6,0.5 1.4,0.5 L4.8,0.5 Q5.6,0.5 6,1.6 L15.8,1.6 Q16.5,1.6 16.5,2.4 L16.5,14.2 Q16.5,15 15.7,15 L1.4,15 Q0.6,15 0.6,14.2 Z" fill="url(#fbody)" stroke="#2f2f2f" stroke-width="1"/>
    <path d="M1.1,3.3 L16,3.3" stroke="#a9a9a9" stroke-width="1.1"/>
    <path d="M1.1,1.3 L5,1.3" stroke="#d0d0d0" stroke-width="1.2"/>
    <path d="M6,3.6 L13.4,3.6 L13.4,12 L9.7,9.8 L6,12 Z" fill="url(#fbg)" stroke="#0d4b72" stroke-width="0.9"/></svg>
<svg width="9" height="12" style="left:48.9px;top:698.1px"><path d="M0,0 L6.5,4.85 L0,9.7 Z" fill="#77797c"/></svg>
<div class="tr" style="left:93px;top:723px">04_Elektrik_und_Mechatronik</div>
<svg width="17" height="15.5" style="left:68.2px;top:734.7px"><path d="M0.6,2.5 L0.6,1.3 Q0.6,0.5 1.4,0.5 L4.8,0.5 Q5.6,0.5 6,1.6 L15.8,1.6 Q16.5,1.6 16.5,2.4 L16.5,14.2 Q16.5,15 15.7,15 L1.4,15 Q0.6,15 0.6,14.2 Z" fill="url(#fbody)" stroke="#2f2f2f" stroke-width="1"/>
    <path d="M1.1,3.3 L16,3.3" stroke="#a9a9a9" stroke-width="1.1"/>
    <path d="M1.1,1.3 L5,1.3" stroke="#d0d0d0" stroke-width="1.2"/>
    <path d="M6,3.6 L13.4,3.6 L13.4,12 L9.7,9.8 L6,12 Z" fill="url(#fbg)" stroke="#0d4b72" stroke-width="0.9"/></svg>
<svg width="9" height="12" style="left:48.9px;top:736.1px"><path d="M0,0 L6.5,4.85 L0,9.7 Z" fill="#77797c"/></svg>
<div class="tr" style="left:79px;top:761px">98_Projekte_Projektmanagement</div>
<svg width="17" height="15.5" style="left:54.2px;top:772.7px"><path d="M0.6,2.5 L0.6,1.3 Q0.6,0.5 1.4,0.5 L4.8,0.5 Q5.6,0.5 6,1.6 L15.8,1.6 Q16.5,1.6 16.5,2.4 L16.5,14.2 Q16.5,15 15.7,15 L1.4,15 Q0.6,15 0.6,14.2 Z" fill="url(#fbody)" stroke="#2f2f2f" stroke-width="1"/>
    <path d="M1.1,3.3 L16,3.3" stroke="#a9a9a9" stroke-width="1.1"/>
    <path d="M1.1,1.3 L5,1.3" stroke="#d0d0d0" stroke-width="1.2"/>
    <path d="M6,3.6 L13.4,3.6 L13.4,12 L9.7,9.8 L6,12 Z" fill="url(#fbg)" stroke="#0d4b72" stroke-width="0.9"/></svg>
<svg width="9" height="12" style="left:34.9px;top:774.1px"><path d="M0,0 L6.5,4.85 L0,9.7 Z" fill="#77797c"/></svg>
<div class="tr" style="left:79px;top:799px">99_Werkstatt_und_Instandhaltung</div>
<svg width="17" height="15.5" style="left:54.2px;top:810.7px"><path d="M0.6,2.5 L0.6,1.3 Q0.6,0.5 1.4,0.5 L4.8,0.5 Q5.6,0.5 6,1.6 L15.8,1.6 Q16.5,1.6 16.5,2.4 L16.5,14.2 Q16.5,15 15.7,15 L1.4,15 Q0.6,15 0.6,14.2 Z" fill="url(#fbody)" stroke="#2f2f2f" stroke-width="1"/>
    <path d="M1.1,3.3 L16,3.3" stroke="#a9a9a9" stroke-width="1.1"/>
    <path d="M1.1,1.3 L5,1.3" stroke="#d0d0d0" stroke-width="1.2"/>
    <path d="M6,3.6 L13.4,3.6 L13.4,12 L9.7,9.8 L6,12 Z" fill="url(#fbg)" stroke="#0d4b72" stroke-width="0.9"/></svg>
<svg width="9" height="12" style="left:34.9px;top:812.1px"><path d="M0,0 L6.5,4.85 L0,9.7 Z" fill="#77797c"/></svg>
<svg width="1873" height="833" style="left:0;top:0" viewBox="0 0 1873 833">
  <!-- funnel -->
  <rect x="153.3" y="124.3" width="19.4" height="3.8" fill="url(#bfold)" stroke="#0d4b72" stroke-width="1"/>
  <path d="M153.8,128.3 L172.2,128.3 L165.2,136 L165.2,143.6 L162.5,141.5 L162.5,136 Z" fill="url(#fbody)" stroke="#2f2f2f" stroke-width="1"/>
  <!-- binoculars -->
  <g transform="translate(-968,40.2)">
  <path d="M1151.8,85.6 L1156.5,84.3 L1157.5,86.6 L1160.5,86.6 L1161.5,84.3 L1166.2,85.6 L1167.4,88.8 Q1168.9,93 1168.9,97 L1168.9,103.4 L1162.7,103.4 L1162.5,97.5 L1155.5,97.5 L1155.3,103.4 L1149.1,103.4 L1149.1,97 Q1149.1,93 1150.6,88.8 Z" fill="url(#fbody)" stroke="#2b2b2b" stroke-width="1.1"/>
  <path d="M1150.8,88.8 L1157.3,88.8 M1160.7,88.8 L1167.2,88.8" stroke="#555" stroke-width="0.9"/>
  <path d="M1149.6,100 L1155,100 M1163,100 L1168.4,100" stroke="#888" stroke-width="1.2"/>
  <ellipse cx="1159" cy="91.5" rx="1.1" ry="1.8" fill="none" stroke="#999" stroke-width="0.6"/>
  </g>
  <!-- list refresh -->
  <rect x="209.5" y="124.5" width="15.5" height="2.4" fill="#fff" stroke="#2f2f2f" stroke-width="1"/>
  <path d="M210.5,127 L210.5,143.5 L214,143.5 M210.5,131.5 L214,131.5 M210.5,137 L214,137" fill="none" stroke="#2f2f2f" stroke-width="1"/>
  <rect x="214" y="129.6" width="5.8" height="2.6" fill="#4d9fd0" stroke="#0d4b72" stroke-width="0.8"/>
  <rect x="214" y="134.6" width="5.8" height="2.6" fill="#4d9fd0" stroke="#0d4b72" stroke-width="0.8"/>
  <rect x="215" y="140.5" width="6" height="2.8" fill="#4d9fd0" stroke="#0d4b72" stroke-width="0.8"/>
  <path d="M224,132.5 Q228.8,134.5 228.4,138.5 Q228,141.5 225.3,143" fill="none" stroke="#0d4b72" stroke-width="2.2"/>
  <path d="M224,132.5 Q228.8,134.5 228.4,138.5 Q228,141.5 225.3,143" fill="none" stroke="#4d9fd0" stroke-width="1"/>
  <path d="M221.5,133.2 L225,130.5 L225.2,135.3 Z" fill="#2f7cad" stroke="#0d4b72" stroke-width="0.7"/>
  <!-- A Z arrow -->
  <text x="236.6" y="131.6" font-family="Liberation Sans" font-weight="bold" font-size="10.5" fill="#333" stroke="#333" stroke-width="0.4">A</text>
  <text x="237" y="143.9" font-family="Liberation Sans" font-weight="bold" font-size="11" fill="#333" stroke="#333" stroke-width="0.4">Z</text>
  <path d="M250.6,124.2 L253.4,124.2 L253.4,137 L256.8,137 L252,143.8 L247.2,137 L250.6,137 Z" fill="#3583b5" stroke="#0d4b72" stroke-width="0.6"/>
  <path d="M262,131 L271,131 L266.5,136.8 Z" fill="#8a8c8f"/>
  <!-- X -->
  <path d="M280.5,127.3 L283.3,124.5 L290,131.2 L296.7,124.5 L299.5,127.3 L292.8,134 L299.5,140.7 L296.7,143.5 L290,136.8 L283.3,143.5 L280.5,140.7 L287.2,134 Z" fill="url(#bfold)" stroke="#0d4b72" stroke-width="1"/>
</svg>
<!-- TABLE -->
<div class="a" style="left:305px;top:113px;width:1114px;height:40px;background:#f1f1f1;border-bottom:2px solid #b3b3b3"></div>
<div class="a" style="left:580px;top:115px;width:1px;height:37px;background:#b9bcbf"></div>
<div class="a" style="left:680px;top:115px;width:1px;height:37px;background:#b9bcbf"></div>
<div class="a" style="left:780px;top:115px;width:1px;height:37px;background:#b9bcbf"></div>
<div class="a" style="left:880px;top:115px;width:1px;height:37px;background:#b9bcbf"></div>
<div class="a" style="left:980px;top:115px;width:1px;height:37px;background:#b9bcbf"></div>
<div class="a" style="left:1080px;top:115px;width:1px;height:37px;background:#b9bcbf"></div>
<div class="a" style="left:1180px;top:115px;width:1px;height:37px;background:#b9bcbf"></div>
<div class="a" style="left:1280px;top:115px;width:1px;height:37px;background:#b9bcbf"></div>
<div class="a" style="left:1373px;top:115px;width:1px;height:37px;background:#b9bcbf"></div>
<div class="th" style="left:312px">Titel</div>
<div class="th" style="left:588px">Revision</div>
<div class="th" style="left:688px">Sperren</div>
<div class="th" style="left:788px">Beschreibung</div>
<div class="th" style="left:888px">Änderungsdatum</div>
<div class="th" style="left:988px">Erstellungsdat...</div>
<div class="th" style="left:1088px">Eigentümer</div>
<div class="th" style="left:1188px">Typ</div>
<div class="th" style="left:1288px">Bearbeitungss..</div>
<div class="th" style="left:1381px">Menü</div>
<svg width="14" height="14" style="left:563px;top:127px">
  <path d="M2.4,0.8 L3.6,0.8 L3.6,9.5 L5.2,9.5 L3,13 L0.8,9.5 L2.4,9.5 Z" fill="#6d6f72"/>
  <text x="6.8" y="6.8" font-family="Liberation Serif" font-weight="bold" font-size="7.5" fill="#6d6f72">Z</text>
  <text x="6.4" y="13.2" font-family="Liberation Serif" font-weight="bold" font-size="8" fill="#6d6f72">A</text>
</svg>
<div class="row" style="top:153px;background:#fff">
  <div class="cell" style="left:37px">04_Elektrik_und_Mechatronik</div>
  <div class="cell" style="left:577px">2026-02-26T0...</div>
  <div class="cell" style="left:677px">2026-02-26T0...</div>
  <div class="cell" style="left:813px">Stefan G...</div>
  <div class="cell" style="left:884px">Lesezeichen-...</div>
  <div class="badge" style="left:980px;top:9px">Entwurf</div>
</div>
<svg width="20" height="18.2" style="left:314.2px;top:163px" viewBox="0 0 17 15.5"><path d="M0.6,2.5 L0.6,1.3 Q0.6,0.5 1.4,0.5 L4.8,0.5 Q5.6,0.5 6,1.6 L15.8,1.6 Q16.5,1.6 16.5,2.4 L16.5,14.2 Q16.5,15 15.7,15 L1.4,15 Q0.6,15 0.6,14.2 Z" fill="url(#fbody)" stroke="#2f2f2f" stroke-width="1"/>
    <path d="M1.1,3.3 L16,3.3" stroke="#a9a9a9" stroke-width="1.1"/>
    <path d="M1.1,1.3 L5,1.3" stroke="#d0d0d0" stroke-width="1.2"/>
    <path d="M6,3.6 L13.4,3.6 L13.4,12 L9.7,9.8 L6,12 Z" fill="url(#fbg)" stroke="#0d4b72" stroke-width="0.9"/></svg>
<div class="a" style="left:1089px;top:161px;width:22px;height:22px;border-radius:50%;background:#6cb33f;color:#fff;font-size:9px;line-height:22px;text-align:center">SG</div>
<svg width="16" height="10" style="left:1389px;top:168px"><path d="M1,1.2 L7.2,7 L13.4,1.2" fill="none" stroke="#5b5e62" stroke-width="1.7"/></svg>
<div class="row" style="top:192px;background:#f3f4f6">
  <div class="cell" style="left:37px">02_Pneumatik</div>
  <div class="cell" style="left:577px">2026-02-26T0...</div>
  <div class="cell" style="left:677px">2026-02-26T0...</div>
  <div class="cell" style="left:813px">Stefan G...</div>
  <div class="cell" style="left:884px">Lesezeichen-...</div>
  <div class="badge" style="left:980px;top:9px">Entwurf</div>
</div>
<svg width="20" height="18.2" style="left:314.2px;top:202px" viewBox="0 0 17 15.5"><path d="M0.6,2.5 L0.6,1.3 Q0.6,0.5 1.4,0.5 L4.8,0.5 Q5.6,0.5 6,1.6 L15.8,1.6 Q16.5,1.6 16.5,2.4 L16.5,14.2 Q16.5,15 15.7,15 L1.4,15 Q0.6,15 0.6,14.2 Z" fill="url(#fbody)" stroke="#2f2f2f" stroke-width="1"/>
    <path d="M1.1,3.3 L16,3.3" stroke="#a9a9a9" stroke-width="1.1"/>
    <path d="M1.1,1.3 L5,1.3" stroke="#d0d0d0" stroke-width="1.2"/>
    <path d="M6,3.6 L13.4,3.6 L13.4,12 L9.7,9.8 L6,12 Z" fill="url(#fbg)" stroke="#0d4b72" stroke-width="0.9"/></svg>
<div class="a" style="left:1089px;top:200px;width:22px;height:22px;border-radius:50%;background:#6cb33f;color:#fff;font-size:9px;line-height:22px;text-align:center">SG</div>
<svg width="16" height="10" style="left:1389px;top:207px"><path d="M1,1.2 L7.2,7 L13.4,1.2" fill="none" stroke="#5b5e62" stroke-width="1.7"/></svg>
<div class="row" style="top:231px;background:#fff">
  <div class="cell" style="left:37px">01_Hydraulik</div>
  <div class="cell" style="left:577px">2026-02-26T0...</div>
  <div class="cell" style="left:677px">2026-02-26T0...</div>
  <div class="cell" style="left:813px">Stefan G...</div>
  <div class="cell" style="left:884px">Lesezeichen-...</div>
  <div class="badge" style="left:980px;top:9px">Entwurf</div>
</div>
<svg width="20" height="18.2" style="left:314.2px;top:241px" viewBox="0 0 17 15.5"><path d="M0.6,2.5 L0.6,1.3 Q0.6,0.5 1.4,0.5 L4.8,0.5 Q5.6,0.5 6,1.6 L15.8,1.6 Q16.5,1.6 16.5,2.4 L16.5,14.2 Q16.5,15 15.7,15 L1.4,15 Q0.6,15 0.6,14.2 Z" fill="url(#fbody)" stroke="#2f2f2f" stroke-width="1"/>
    <path d="M1.1,3.3 L16,3.3" stroke="#a9a9a9" stroke-width="1.1"/>
    <path d="M1.1,1.3 L5,1.3" stroke="#d0d0d0" stroke-width="1.2"/>
    <path d="M6,3.6 L13.4,3.6 L13.4,12 L9.7,9.8 L6,12 Z" fill="url(#fbg)" stroke="#0d4b72" stroke-width="0.9"/></svg>
<div class="a" style="left:1089px;top:239px;width:22px;height:22px;border-radius:50%;background:#6cb33f;color:#fff;font-size:9px;line-height:22px;text-align:center">SG</div>
<svg width="16" height="10" style="left:1389px;top:246px"><path d="M1,1.2 L7.2,7 L13.4,1.2" fill="none" stroke="#5b5e62" stroke-width="1.7"/></svg>
<div class="row" style="top:270px;background:#f3f4f6">
  <div class="cell" style="left:37px">00_Mechanische Konstruktion</div>
  <div class="cell" style="left:577px">2026-02-26T0...</div>
  <div class="cell" style="left:677px">2026-02-26T0...</div>
  <div class="cell" style="left:813px">Stefan G...</div>
  <div class="cell" style="left:884px">Lesezeichen-...</div>
  <div class="badge" style="left:980px;top:9px">Entwurf</div>
</div>
<svg width="20" height="18.2" style="left:314.2px;top:280px" viewBox="0 0 17 15.5"><path d="M0.6,2.5 L0.6,1.3 Q0.6,0.5 1.4,0.5 L4.8,0.5 Q5.6,0.5 6,1.6 L15.8,1.6 Q16.5,1.6 16.5,2.4 L16.5,14.2 Q16.5,15 15.7,15 L1.4,15 Q0.6,15 0.6,14.2 Z" fill="url(#fbody)" stroke="#2f2f2f" stroke-width="1"/>
    <path d="M1.1,3.3 L16,3.3" stroke="#a9a9a9" stroke-width="1.1"/>
    <path d="M1.1,1.3 L5,1.3" stroke="#d0d0d0" stroke-width="1.2"/>
    <path d="M6,3.6 L13.4,3.6 L13.4,12 L9.7,9.8 L6,12 Z" fill="url(#fbg)" stroke="#0d4b72" stroke-width="0.9"/></svg>
<div class="a" style="left:1089px;top:278px;width:22px;height:22px;border-radius:50%;background:#6cb33f;color:#fff;font-size:9px;line-height:22px;text-align:center">SG</div>
<svg width="16" height="10" style="left:1389px;top:285px"><path d="M1,1.2 L7.2,7 L13.4,1.2" fill="none" stroke="#5b5e62" stroke-width="1.7"/></svg>
<div class="a" style="left:580px;top:153px;width:1px;height:680px;background:#b9bcbf"></div>
<div class="a" style="left:1373px;top:153px;width:1px;height:680px;background:#b9bcbf"></div>
<!-- RIGHT PANEL -->
<div class="a" style="left:1419px;top:43px;width:454px;height:790px;background:#f1f1f1;border-left:1px solid #dcdcdc"></div>
<div class="a" style="left:1420px;top:43px;width:453px;height:39px;background:#fff;border-bottom:1px solid #dddddd"></div>
<div class="a" style="left:1431px;top:55px;font-size:13px;font-weight:bold;color:#77797c;white-space:nowrap">Suchergebnisse für '2811'</div>
<div class="a" style="left:1420px;top:82px;width:453px;height:66px;background:#f8f8f8;border-bottom:1px solid #cfcfcf"></div>
<div class="a" style="left:1425px;top:160px;font-size:19px;font-weight:bold;color:#77797c;white-space:nowrap">2&nbsp; Ergebnisse</div>

<!-- sort box -->
<div class="a" style="left:1665px;top:152px;width:56px;height:38px;border:1px solid #b4b4b4;border-radius:4px;background:#f1f1f1"></div>

<svg width="1873" height="833" style="left:0;top:0" viewBox="0 0 1873 833">
  <!-- expand -->
  <path d="M1840.8,60.6 L1845.2,56.2" stroke="#6d6f72" stroke-width="1.8"/>
  <path d="M1841.2,54.9 L1847.6,54.9 L1847.6,61.2 Z" fill="#6d6f72"/>
  <path d="M1839.6,63.1 L1835.2,67.5" stroke="#6d6f72" stroke-width="1.8"/>
  <path d="M1833.1,62.4 L1833.1,68.6 L1839.3,68.6 Z" fill="#6d6f72"/>
  <!-- close X (clipped) -->
  <path d="M1871,57.5 L1881,67.5 M1871,67.5 L1881,57.5" stroke="#6d6f72" stroke-width="1.8"/>

  <!-- round icons -->
  <g fill="#77787c">
    <circle cx="1600.9" cy="112.9" r="15"/>
    <circle cx="1659.1" cy="112.9" r="15"/>
    <circle cx="1717.1" cy="112.9" r="15"/>
    <circle cx="1775" cy="112.9" r="15"/>
  </g>
  <!-- cube -->
  <path d="M1601,107 L1607.6,110.3 L1607.6,117.8 L1601,121 L1594.4,117.8 L1594.4,110.3 Z" fill="#fff"/>
  <path d="M1594.6,110.5 L1601,113.6 L1607.4,110.5 M1601,113.6 L1601,120.8" fill="none" stroke="#77787c" stroke-width="0.8"/>
  <!-- person Y -->
  <g stroke="#fff" fill="none" stroke-linecap="round">
    <path d="M1654.5,108.2 L1659.1,113.2 L1663.7,108.2" stroke-width="1.8"/>
    <path d="M1659.1,113.2 L1659.1,120.6" stroke-width="2.3"/>
  </g>
  <circle cx="1659.1" cy="108.7" r="1.8" fill="#fff"/>
  <!-- clock -->
  <circle cx="1717.1" cy="113.6" r="5.9" fill="none" stroke="#fff" stroke-width="1.8"/>
  <path d="M1717.1,110 L1717.1,114 L1720.5,114" fill="none" stroke="#fff" stroke-width="1.4"/>
  <path d="M1713.5,119 L1711.8,120.8 M1720.7,119 L1722.4,120.8" stroke="#77787c" stroke-width="1.3"/>
  <!-- pin -->
  <path d="M1775,121 L1770.6,113.5 Q1769.5,111.5 1769.7,110 Q1770.3,106.8 1775,106.8 Q1779.7,106.8 1780.3,110 Q1780.5,111.5 1779.4,113.5 Z" fill="#fff"/>
  <circle cx="1775" cy="110.5" r="2" fill="#77787c"/>

  <!-- help circle -->
  <circle cx="1568.3" cy="171.4" r="9.2" fill="#77787c"/>
  <text x="1568.3" y="176.8" font-family="Liberation Sans" font-weight="bold" font-size="14.5" fill="#fff" text-anchor="middle">?</text>

  <!-- sort icon -->
  <g fill="#333">
    <rect x="1678.8" y="161.1" width="12.7" height="2.4"/>
    <rect x="1678.8" y="165.1" width="9.6" height="2.4"/>
    <rect x="1678.8" y="169.1" width="7.2" height="2.4"/>
    <rect x="1678.8" y="173.3" width="4.5" height="2.4"/>
    <rect x="1678.8" y="177.4" width="2.8" height="2.4"/>
    <rect x="1693.6" y="161" width="2.5" height="16"/>
    <path d="M1690.6,176 L1699.1,176 L1694.85,180.4 Z"/>
    <path d="M1704.9,167.9 L1714.4,167.9 L1709.65,174.8 Z"/>
  </g>
  <!-- grid -->
  <g fill="#77787c">
    <rect x="1728.9" y="162" width="6.6" height="6.6"/><rect x="1736.9" y="162" width="6.6" height="6.6"/><rect x="1744.9" y="162" width="6.6" height="6.6"/>
    <rect x="1728.9" y="170" width="6.6" height="6.6"/><rect x="1736.9" y="170" width="6.6" height="6.6"/><rect x="1744.9" y="170" width="6.6" height="6.6"/>
    <rect x="1728.9" y="178" width="6.6" height="6.2"/><rect x="1736.9" y="178" width="6.6" height="6.2"/><rect x="1744.9" y="178" width="6.6" height="6.2"/>
  </g>
  <!-- expand width -->
  <g fill="none" stroke="#77787c" stroke-width="1.4">
    <path d="M1767.6,167.6 L1767.6,163.5 L1788.4,163.5 L1788.4,167.6"/>
    <path d="M1767.6,178 L1767.6,182 L1788.4,182 L1788.4,178"/>
  </g>
  <g fill="#77787c">
    <rect x="1770.5" y="172.2" width="5.3" height="2.2"/>
    <path d="M1767.3,173.3 L1771.6,169.3 L1771.6,177.3 Z"/>
    <rect x="1780.3" y="172.2" width="5.3" height="2.2"/>
    <path d="M1788.8,173.3 L1784.5,169.3 L1784.5,177.3 Z"/>
  </g>
  <!-- info filled -->
  <circle cx="1816" cy="172.1" r="11.1" fill="#77787c"/>
  <circle cx="1816" cy="165.6" r="1.4" fill="#fff"/>
  <rect x="1814.8" y="169.5" width="2.5" height="10.4" fill="#fff"/>
  <!-- chevron -->
  <path d="M1846.8,170 L1853,175.5 L1859.2,170" fill="none" stroke="#77787c" stroke-width="1.8"/>
</svg>

<!-- card 1 -->
<div class="a" style="left:1442px;top:207px;width:419px;height:384px;background:#fff;border:1px solid #dedede"></div>
<div class="a" style="left:1443px;top:208px;width:417px;height:314px;background:#f3f4f6;border-bottom:1px solid #e4e4e4"></div>
<div class="a" style="left:1476px;top:536px;font-size:13px;color:#368ec6;white-space:nowrap">SWX-0000<span style="background:#f5b97c;color:#000;font-weight:bold;padding:0 0.5px">2811</span></div>
<div class="a" style="left:1458px;top:566px;font-size:11px;color:#77797c;white-space:nowrap">Physisches Produkt | -.1 | In Arbeit | <span style="color:#368ec6">Stefan Güthling</span> | 16:00:34 | Stefan...</div>

<svg width="1873" height="833" style="left:0;top:0" viewBox="0 0 1873 833">
  <!-- small cube -->
  <path d="M1464.9,537.8 L1471.2,540.5 L1471.2,547.8 L1464.9,550.6 L1458.6,547.8 L1458.6,540.5 Z" fill="#5aa7d6" stroke="#333" stroke-width="1"/>
  <path d="M1458.8,540.7 L1464.9,543.3 L1471,540.7 M1464.9,543.3 L1464.9,550.4" fill="none" stroke="#333" stroke-width="0.9"/>
  <path d="M1459.5,541 L1464.9,538.6 L1470.3,541 L1464.9,543 Z" fill="#cfe6f3"/>
  <!-- card chevron -->
  <path d="M1828.3,554.8 L1834.8,560.6 L1841.3,554.8" fill="none" stroke="#5b5e62" stroke-width="1.8"/>

  <!-- leg image -->
  <g stroke-linejoin="round">
    <path d="M1641,310 L1656,310 L1656.5,317 L1640.5,317 Z" fill="#8c8c8e"/>
    <path d="M1635,318 L1641,314 L1653,315 L1656,322 L1654,330 L1640,330 L1634.5,326 Z" fill="#8e8f94" stroke="#3d3d42" stroke-width="0.9"/>
    <!-- outer frame -->
    <path d="M1634.5,327 L1637.5,327 L1638,348 L1654.5,370 L1652,373 L1635.5,350 Z" fill="#b3b4b9" stroke="#45464c" stroke-width="0.8"/>
    <path d="M1652.5,326 L1656,324 L1664,336 L1670,362 L1668,370 L1664,374 L1653,374 L1651,370 L1648,360 L1654,361 L1663,364 L1664,344 L1657,334 Z" fill="#babbc0" stroke="#45464c" stroke-width="0.8"/>
    <path d="M1637.8,331 L1650,331 L1650,349 L1639,349 Z" fill="#c9cacf" stroke="#6a6b70" stroke-width="0.7"/>
    <path d="M1640.5,334 L1648.5,334 L1648.5,346 L1640.5,346 Z" fill="#f3f4f6"/>
    <!-- pylon + navy -->
    <path d="M1649.5,330 L1657,330 L1659,352 L1651,354 Z" fill="#d6d7db" stroke="#5e5f65" stroke-width="0.8"/>
    <path d="M1652.5,339 L1657.5,338 L1658.5,351 L1653,352 Z" fill="#1d2a78"/>
    <path d="M1659,341 L1663.5,344 L1663.5,360 L1659.5,356 Z" fill="#233089"/>
    <path d="M1648,355 L1652,352 L1660,359 L1656,362 Z" fill="#b7b8bc" stroke="#55565c" stroke-width="0.7"/>
    <!-- ankle -->
    <path d="M1655.5,373.5 L1667.5,373.5 L1667.5,384.5 L1655.5,384.5 Z" fill="#b9babd" stroke="#4f5055" stroke-width="0.8"/>
    <path d="M1652.5,384 L1676.5,384 L1676,393 L1653,394 Z" fill="#c6c7ca" stroke="#4f5055" stroke-width="0.8"/>
    <path d="M1664.5,391 L1678,390 L1678.5,404 L1668,409 Z" fill="#6b6c70"/>
    <!-- orange cylinder -->
    <path d="M1640,411 L1659,391.5 L1664.5,396 L1646,416 Z" fill="#b87b3d" stroke="#5a3a18" stroke-width="0.6"/>
    <path d="M1648,404 L1653,399 L1656,401.5 L1651,406.5 Z" fill="#6e4a22"/>
    <!-- sole -->
    <path d="M1630,418 C1645,415 1662,408 1672,398 C1675,395 1678.5,395 1679,399 C1679.5,404 1676,409 1668,413 C1658,417 1645,418.5 1630,418 Z" fill="#1a1a1c"/>
  </g>
</svg>

<!-- card 2 -->
<div class="a" style="left:1442px;top:601px;width:419px;height:240px;background:#f3f4f6;border:1px solid #dedede"></div>
<svg width="1873" height="833" style="left:0;top:0" viewBox="0 0 1873 833">
  <g transform="rotate(-30 1652 757)">
    <ellipse cx="1652" cy="757" rx="27.5" ry="45" fill="none" stroke="#5f5c59" stroke-width="5.6"/>
    <ellipse cx="1652" cy="757" rx="27.5" ry="45" fill="none" stroke="#a7a39e" stroke-width="3.6"/>
    <ellipse cx="1652" cy="757" rx="24.8" ry="42.3" fill="none" stroke="#6f6c69" stroke-width="0.8"/>
  </g>
  <path d="M1641,790 L1651,794 L1657,802 L1652,805.5 L1644,800 Z" fill="#8d8985" stroke="#4f4c49" stroke-width="0.8"/>
  <circle cx="1646.5" cy="796.8" r="1.2" fill="#444"/><circle cx="1651.2" cy="799.3" r="1.2" fill="#444"/>
</svg>
<div class="a" style="left:1862px;top:815px;width:11px;height:18px;background:#efefef;border-top:1px solid #d4d4d4"></div>
</body></html>
